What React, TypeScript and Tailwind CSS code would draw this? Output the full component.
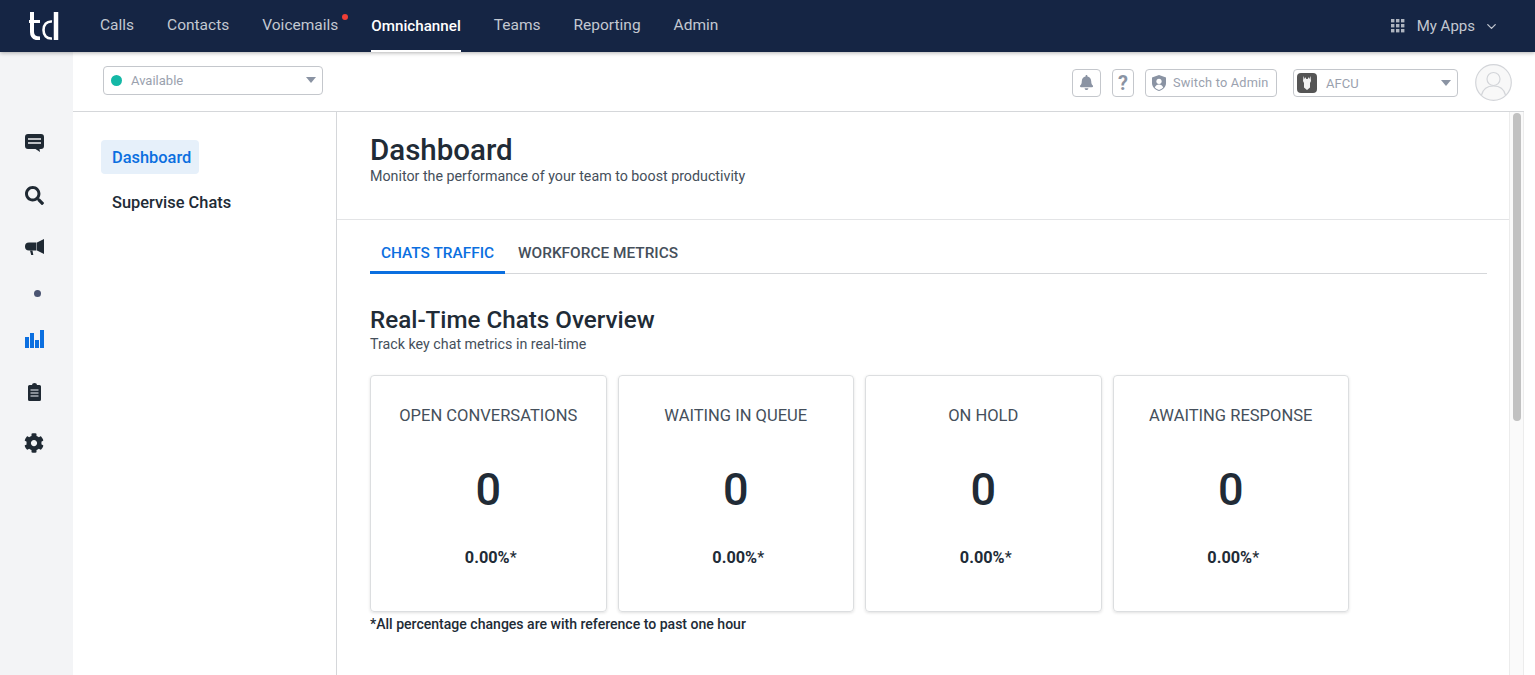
import { ChevronDown } from 'lucide-react'
import { FaBell, FaCog, FaSearch } from 'react-icons/fa'

const navItems = ['Calls', 'Contacts', 'Voicemails', 'Omnichannel', 'Teams', 'Reporting', 'Admin']

const stats = ['OPEN CONVERSATIONS', 'WAITING IN QUEUE', 'ON HOLD', 'AWAITING RESPONSE']

const Caret = () => <span className="ml-auto block w-0 h-0 border-x-[5.500px] border-x-transparent border-t-[6px] border-t-[#8a93a3]" />

const TdLogo = () => (
  <svg width="30" height="28" viewBox="0 0 30 28" fill="none" stroke="#fff">
    <path d="M3 0v20c0 4.500 2.500 6.500 8 6.500" strokeWidth="4" />
    <path d="M0 9.500h11" strokeWidth="3" />
    <path d="M23 9.500c-5.500-.5-8.500 3.500-8.500 8.500s3 9 8.500 8.500" strokeWidth="2.600" />
    <path d="M27 0v28" strokeWidth="4.500" />
  </svg>
)

const AppsIcon = () => (
  <svg width="14" height="14" viewBox="0 0 14 14" fill="#aeb4bf">
    {[0, 5, 10].map(y => [0, 5, 10].map(x => <rect key={`${x}-${y}`} x={x} y={y} width="3.4" height="3.4" />))}
  </svg>
)

const ChatIcon = () => (
  <svg width="19" height="18" viewBox="0 0 19 18">
    <path d="M3 0h13a3 3 0 0 1 3 3v9a3 3 0 0 1-3 3h-1.500l.5 3-4.500-3H3a3 3 0 0 1-3-3V3a3 3 0 0 1 3-3z" fill="#1f2933" />
    <path d="M3 5h13M3 9h13" stroke="#f3f4f6" strokeWidth="1.700" />
  </svg>
)

const MegaphoneIcon = () => (
  <svg width="19" height="18" viewBox="0 0 19 18" fill="#1f2933">
    <path d="M19 0v15l-7-3.500V3.500z" />
    <path d="M4 3.500h7.500v8H4a4 4 0 0 1 0-8z" />
    <path d="M5 11.500h2.500l.8 4.500H6.200z" />
  </svg>
)

const BarsIcon = () => (
  <svg width="19" height="18" viewBox="0 0 19 18" fill="#0b6fe0">
    <rect x="0" y="7" width="4" height="11" />
    <rect x="5" y="3" width="4" height="15" />
    <rect x="10" y="10" width="4" height="8" />
    <rect x="15" y="0" width="4" height="18" />
  </svg>
)

const ClipboardIcon = () => (
  <svg width="13" height="18" viewBox="0 0 13 18">
    <path d="M1.500 2H4a2.500 2 0 0 1 5 0h2.500A1.500 1.500 0 0 1 13 3.500v13a1.500 1.500 0 0 1-1.500 1.500h-10A1.500 1.500 0 0 1 0 16.500v-13A1.500 1.500 0 0 1 1.500 2z" fill="#1f2933" />
    <path d="M2.500 7h8M2.500 10h8M2.500 13h8" stroke="#aab0b8" strokeWidth="1.500" />
  </svg>
)

const ShieldUser = () => (
  <svg width="14" height="16" viewBox="0 0 14 16">
    <path d="M7 0l7 2.500v5.500c0 4-3 6.700-7 8-4-1.300-7-4-7-8V2.500z" fill="#8a93a3" />
    <circle cx="7" cy="6.300" r="2.600" fill="#fff" />
    <path d="M2.800 12.500c.6-2 2.300-3 4.200-3s3.600 1 4.200 3c-1.100 1.200-2.500 2-4.200 2.500-1.700-.5-3.100-1.300-4.200-2.500z" fill="#fff" />
  </svg>
)

const AfcuLogo = () => (
  <span className="w-[20px] h-[20px] rounded-[4px] bg-[#555555] flex items-center justify-center">
    <svg width="10" height="14" viewBox="0 0 10 14" fill="#f2f2f2">
      <path d="M1.500 0l1.200 3 .8-2 .8 2h1.400l.8-2 .8 2L8.500 0 9 5 8 7v4.500L5 14l-3-2.500V7L1 5z" />
    </svg>
  </span>
)

const Avatar = () => (
  <svg width="37" height="37" viewBox="0 0 37 37" fill="#f8f8f8" stroke="#d3d5d9" strokeWidth="1.200">
    <circle cx="18.500" cy="18.500" r="17.800" />
    <circle cx="18.500" cy="15" r="6.500" fill="none" />
    <path d="M6.500 31c1.500-6 6-9 12-9s10.500 3 12 9" fill="none" />
  </svg>
)

export default function App() {
  return (
    <div className="h-[675px] overflow-hidden flex flex-col bg-white font-['Roboto',sans-serif] text-[#212b36]">
      <header className="h-[52px] flex-shrink-0 bg-[#152544] flex items-center shadow-[0_1px_4px_rgba(0,0,0,0.3)] relative z-10">
        <div className="w-[100px] pl-[29px] flex-shrink-0"><TdLogo /></div>
        <nav className="flex h-full gap-[33px]">
          {navItems.map(item => (
            <div key={item} className={`relative flex items-center ${item === 'Omnichannel' ? 'text-[15.200px] text-white font-medium border-b-[2px] border-white pt-[2px]' : 'text-[15.500px] text-[#c3c8d1]'}`}>
              {item}
              {item === 'Voicemails' && <span className="absolute right-[-10px] top-[14px] w-[6px] h-[6px] rounded-full bg-[#ef3e36]" />}
            </div>
          ))}
        </nav>
        <div className="ml-auto flex items-center pr-[36px] text-[#c3c8d1] text-[15px]">
          <AppsIcon />
          <span className="ml-[12px]">My Apps</span>
          <ChevronDown className="ml-[9px] w-[15px] h-[15px]" />
        </div>
      </header>

      <div className="flex flex-1 min-h-0">
        <aside className="w-[73px] flex-shrink-0 bg-[#f3f4f6] flex flex-col items-center pt-[81px]">
          <div className="h-[18px] flex items-center justify-center -translate-x-[2px] translate-y-px"><ChatIcon /></div>
          <div className="h-[20px] mt-[34px] flex items-center justify-center -translate-x-[2px]"><FaSearch className="w-[19px] h-[19px] text-[#1f2933]" /></div>
          <div className="h-[18px] mt-[33px] flex items-center justify-center -translate-x-[2px] translate-y-px"><MegaphoneIcon /></div>
          <div className="w-[7px] h-[7px] mt-[34px] rounded-full bg-[#4a5472] translate-x-px" />
          <div className="h-[18px] mt-[33px] flex items-center justify-center -translate-x-[2px]"><BarsIcon /></div>
          <div className="h-[18px] mt-[35px] flex items-center justify-center -translate-x-[2px]"><ClipboardIcon /></div>
          <div className="h-[20px] mt-[32px] flex items-center justify-center -translate-x-[3px]"><FaCog className="w-[20px] h-[20px] text-[#1f2933]" /></div>
        </aside>

        <div className="flex-1 min-w-0 flex flex-col">
          <div className="h-[59px] flex-shrink-0 flex items-center pl-[30px] pr-[23px]">
            <div className="w-[220px] h-[29px] -mt-[3px] border border-[#c4c7cc] rounded-[4px] flex items-center pl-[7px] pr-[6px] text-[13px] text-[#9aa1ae]">
              <span className="w-[11px] h-[11px] rounded-full bg-[#14b8a6] mr-[9px]" />
              <span className="mt-[1px]">Available</span>
              <Caret />
            </div>
            <div className="ml-auto flex items-center pt-[2px] text-[12.750px] text-[#9aa1ae]">
              <div className="w-[29px] h-[28px] border border-[#c4c7cc] rounded-[4px] flex items-center justify-center">
                <FaBell className="w-[15px] h-[15px] text-[#8a93a3]" />
              </div>
              <div className="w-[22px] h-[28px] ml-[11px] border border-[#c4c7cc] rounded-[4px] flex items-center justify-center text-[20px] font-bold text-[#8a93a3]">?</div>
              <div className="w-[132px] h-[28px] ml-[11px] border border-[#c4c7cc] rounded-[4px] flex items-center pl-[6px]">
                <ShieldUser />
                <span className="ml-[7px] tracking-[0.2px]">Switch to Admin</span>
              </div>
              <div className="w-[165px] h-[28px] ml-[16px] border border-[#c4c7cc] rounded-[4px] flex items-center pl-[3px] pr-[6px]">
                <AfcuLogo />
                <span className="ml-[9px] mt-[3px] text-[13px]">AFCU</span>
                <Caret />
              </div>
              <div className="ml-[17px]"><Avatar /></div>
            </div>
          </div>

          <div className="flex-1 min-h-0 flex border-t border-[#d5d7da] mr-[11px]">
            <div className="w-[264px] flex-shrink-0 border-r border-[#d5d7da] pt-[28px] pl-[28px]">
              <div className="inline-block h-[34px] leading-[35px] pl-[11px] pr-[8px] rounded-[4px] bg-[#e6f0fa] text-[#0b6fe0] text-[16.400px] font-medium">Dashboard</div>
              <div className="mt-[11px] h-[34px] leading-[35px] pl-[11px] text-[16.400px] font-medium text-[#212b36]">Supervise Chats</div>
            </div>

            <main className="flex-1 min-w-0 flex flex-col">
              <div className="h-[108px] flex-shrink-0 border-b border-[#e3e4e6] pl-[33px] pt-[20px]">
                <h1 className="text-[29.500px] leading-[36px] font-medium">Dashboard</h1>
                <p className="text-[14.250px] leading-[17px] text-[#454f5b]">Monitor the performance of your team to boost productivity</p>
              </div>
              <div className="pl-[33px] pr-[22px]">
                <div className="h-[54px] flex items-end border-b border-[#d5d7da] text-[15.400px] font-medium">
                  <div className="h-[37px] px-[11px] pb-[1px] text-[#0b6fe0] border-b-[3px] border-[#0b6fe0] -mb-px flex items-center">CHATS TRAFFIC</div>
                  <div className="h-[37px] pl-[13px] pb-[2px] text-[#454f5b] flex items-center">WORKFORCE METRICS</div>
                </div>
                <h2 className="mt-[31px] text-[24.200px] leading-[30px] font-medium">Real-Time Chats Overview</h2>
                <p className="text-[14.250px] leading-[18px] text-[#454f5b]">Track key chat metrics in real-time</p>
                <div className="mt-[22px] flex gap-[11px]">
                  {stats.map(label => (
                    <div key={label} className="w-[236.500px] h-[237px] flex-shrink-0 border border-[#dcdee0] rounded-[4px] shadow-[0_1px_3px_rgba(0,0,0,0.12)] flex flex-col items-center">
                      <div className="mt-[30px] text-[16.550px] leading-[20px] text-[#454f5b]">{label}</div>
                      <div className="mt-[40px] text-[45px] leading-[48px] font-medium">0</div>
                      <div className="mt-[34px] pl-[5px] text-[16.300px] leading-[20px]"><span className="font-bold">0.00%</span>*</div>
                    </div>
                  ))}
                </div>
                <p className="mt-[3px] text-[14.050px] leading-[18px] font-medium">*All percentage changes are with reference to past one hour</p>
              </div>
            </main>

            <div className="w-[15px] flex-shrink-0 border-x border-[#ececec] bg-[#fafafa] pt-[1px] flex justify-center">
              <div className="w-[8px] h-[308px] rounded-full bg-[#c1c1c1]" />
            </div>
          </div>
        </div>
      </div>
    </div>
  )
}
